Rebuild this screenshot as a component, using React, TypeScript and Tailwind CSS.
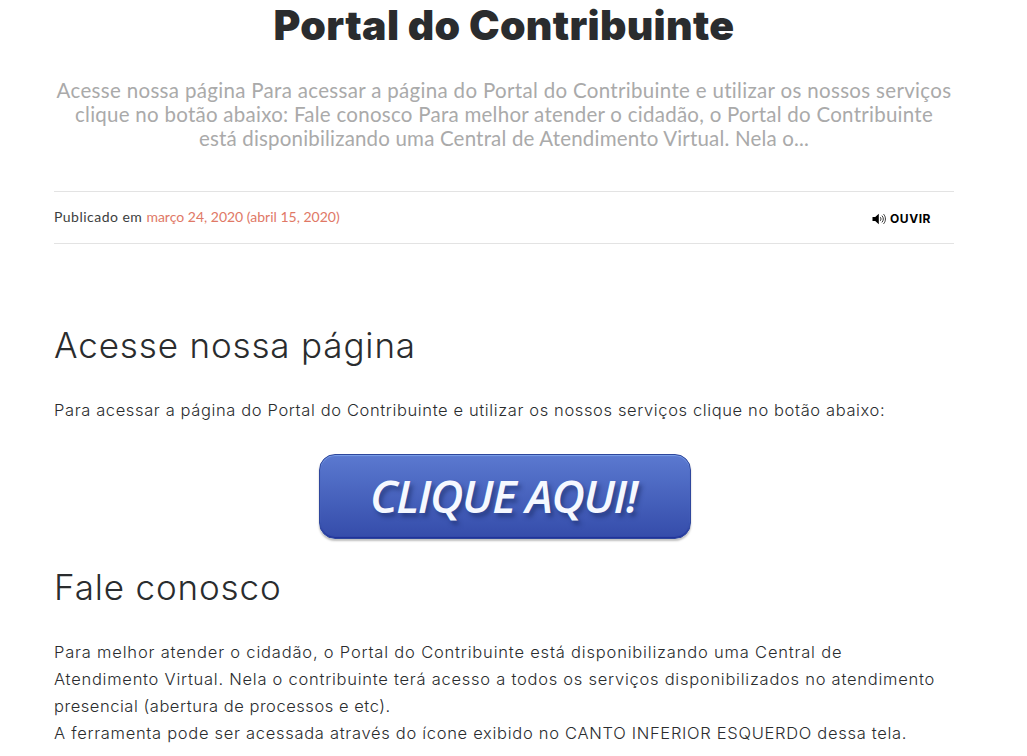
function SpeakerIcon() {
  return (
    <svg className="w-[14px] h-[12px]" viewBox="0 0 14 12" fill="none">
      <path d="M0.5 4h2.7l3.6-3.2v10.4L3.2 8H0.5z" fill="#000" />
      <path d="M8.3 4.2c.9 1 .9 2.6 0 3.6M9.9 2.6c1.9 1.9 1.9 4.9 0 6.8M11.5 1.1c2.6 2.8 2.6 7 0 9.8" stroke="#222" strokeWidth="0.9" />
    </svg>
  );
}

export default function App() {
  return (
    <main className="h-[756px] overflow-hidden bg-white font-['Inter','Liberation_Sans',sans-serif] text-[#2a2c2e]">
      <article className="ml-[54px] w-[900px] whitespace-nowrap">
        <h1 className="text-center text-[41px] leading-[50px] font-black tracking-[0.3px]">
          Portal do Contribuinte
        </h1>

        <p className="mt-[28px] text-center font-['Lato',sans-serif] text-[20.5px] leading-[24px] text-[#aaaaaa]">
          <span className="block tracking-[0.32px]">Acesse nossa página Para acessar a página do Portal do Contribuinte e utilizar os nossos serviços</span>
          <span className="block tracking-[0.26px]">clique no botão abaixo: Fale conosco Para melhor atender o cidadão, o Portal do Contribuinte</span>
          <span className="block tracking-[0.18px]">está disponibilizando uma Central de Atendimento Virtual. Nela o...</span>
        </p>

        <div className="mt-[41px] flex h-[53px] items-center justify-between border-y border-[#e3e3e3] pr-[23px]">
          <p className="pb-[2px] font-['Lato',sans-serif] text-[14px] leading-[20px]">
            <span className="tracking-[0.48px] text-[#3c3e40]">Publicado em </span>
            <span className="text-[#e07866]">março 24, 2020 (abril 15, 2020)</span>
          </p>
          <button className="flex items-center gap-[4px] pt-[2px] text-[12px] font-bold tracking-[0.55px] text-black">
            <SpeakerIcon />
            OUVIR
          </button>
        </div>

        <h2 className="mt-[77px] text-[35px] leading-[48px] font-light tracking-[0.85px]">Acesse nossa página</h2>
        <p className="mt-[28px] text-[16.5px] leading-[27px] font-light tracking-[0.62px]">
          Para acessar a página do Portal do Contribuinte e utilizar os nossos serviços clique no botão abaixo:
        </p>

        <div className="mt-[30px] flex justify-center pl-[2px]">
          <a
            href="#"
            className="flex h-[85px] w-[372px] items-center justify-center rounded-[16px] border border-[#2f479c] bg-gradient-to-b from-[#5b79d0] to-[#354caa] pr-[3px] pb-[3px] font-['Open_Sans',sans-serif] text-[46px] font-semibold tracking-[-1.4px] italic text-[#f5f8ff] shadow-[0_2px_2px_rgba(0,0,0,0.25),inset_0_1px_1px_#7ba0e8,inset_0_-1px_1px_#20309a] [text-shadow:3px_4px_4px_rgba(20,35,90,0.5)]"
          >
            CLIQUE AQUI!
          </a>
        </div>

        <h2 className="mt-[24px] text-[35px] leading-[48px] font-light tracking-[0.85px]">Fale conosco</h2>
        <p className="mt-[28px] text-[16.5px] leading-[27px] font-light">
          <span className="block tracking-[0.81px]">Para melhor atender o cidadão, o Portal do Contribuinte está disponibilizando uma Central de</span>
          <span className="block tracking-[0.745px]">Atendimento Virtual. Nela o contribuinte terá acesso a todos os serviços disponibilizados no atendimento</span>
          <span className="block tracking-[0.54px]">presencial (abertura de processos e etc).</span>
          <span className="block tracking-[0.7px]">A ferramenta pode ser acessada através do ícone exibido no CANTO INFERIOR ESQUERDO dessa tela.</span>
        </p>
      </article>
    </main>
  );
}
